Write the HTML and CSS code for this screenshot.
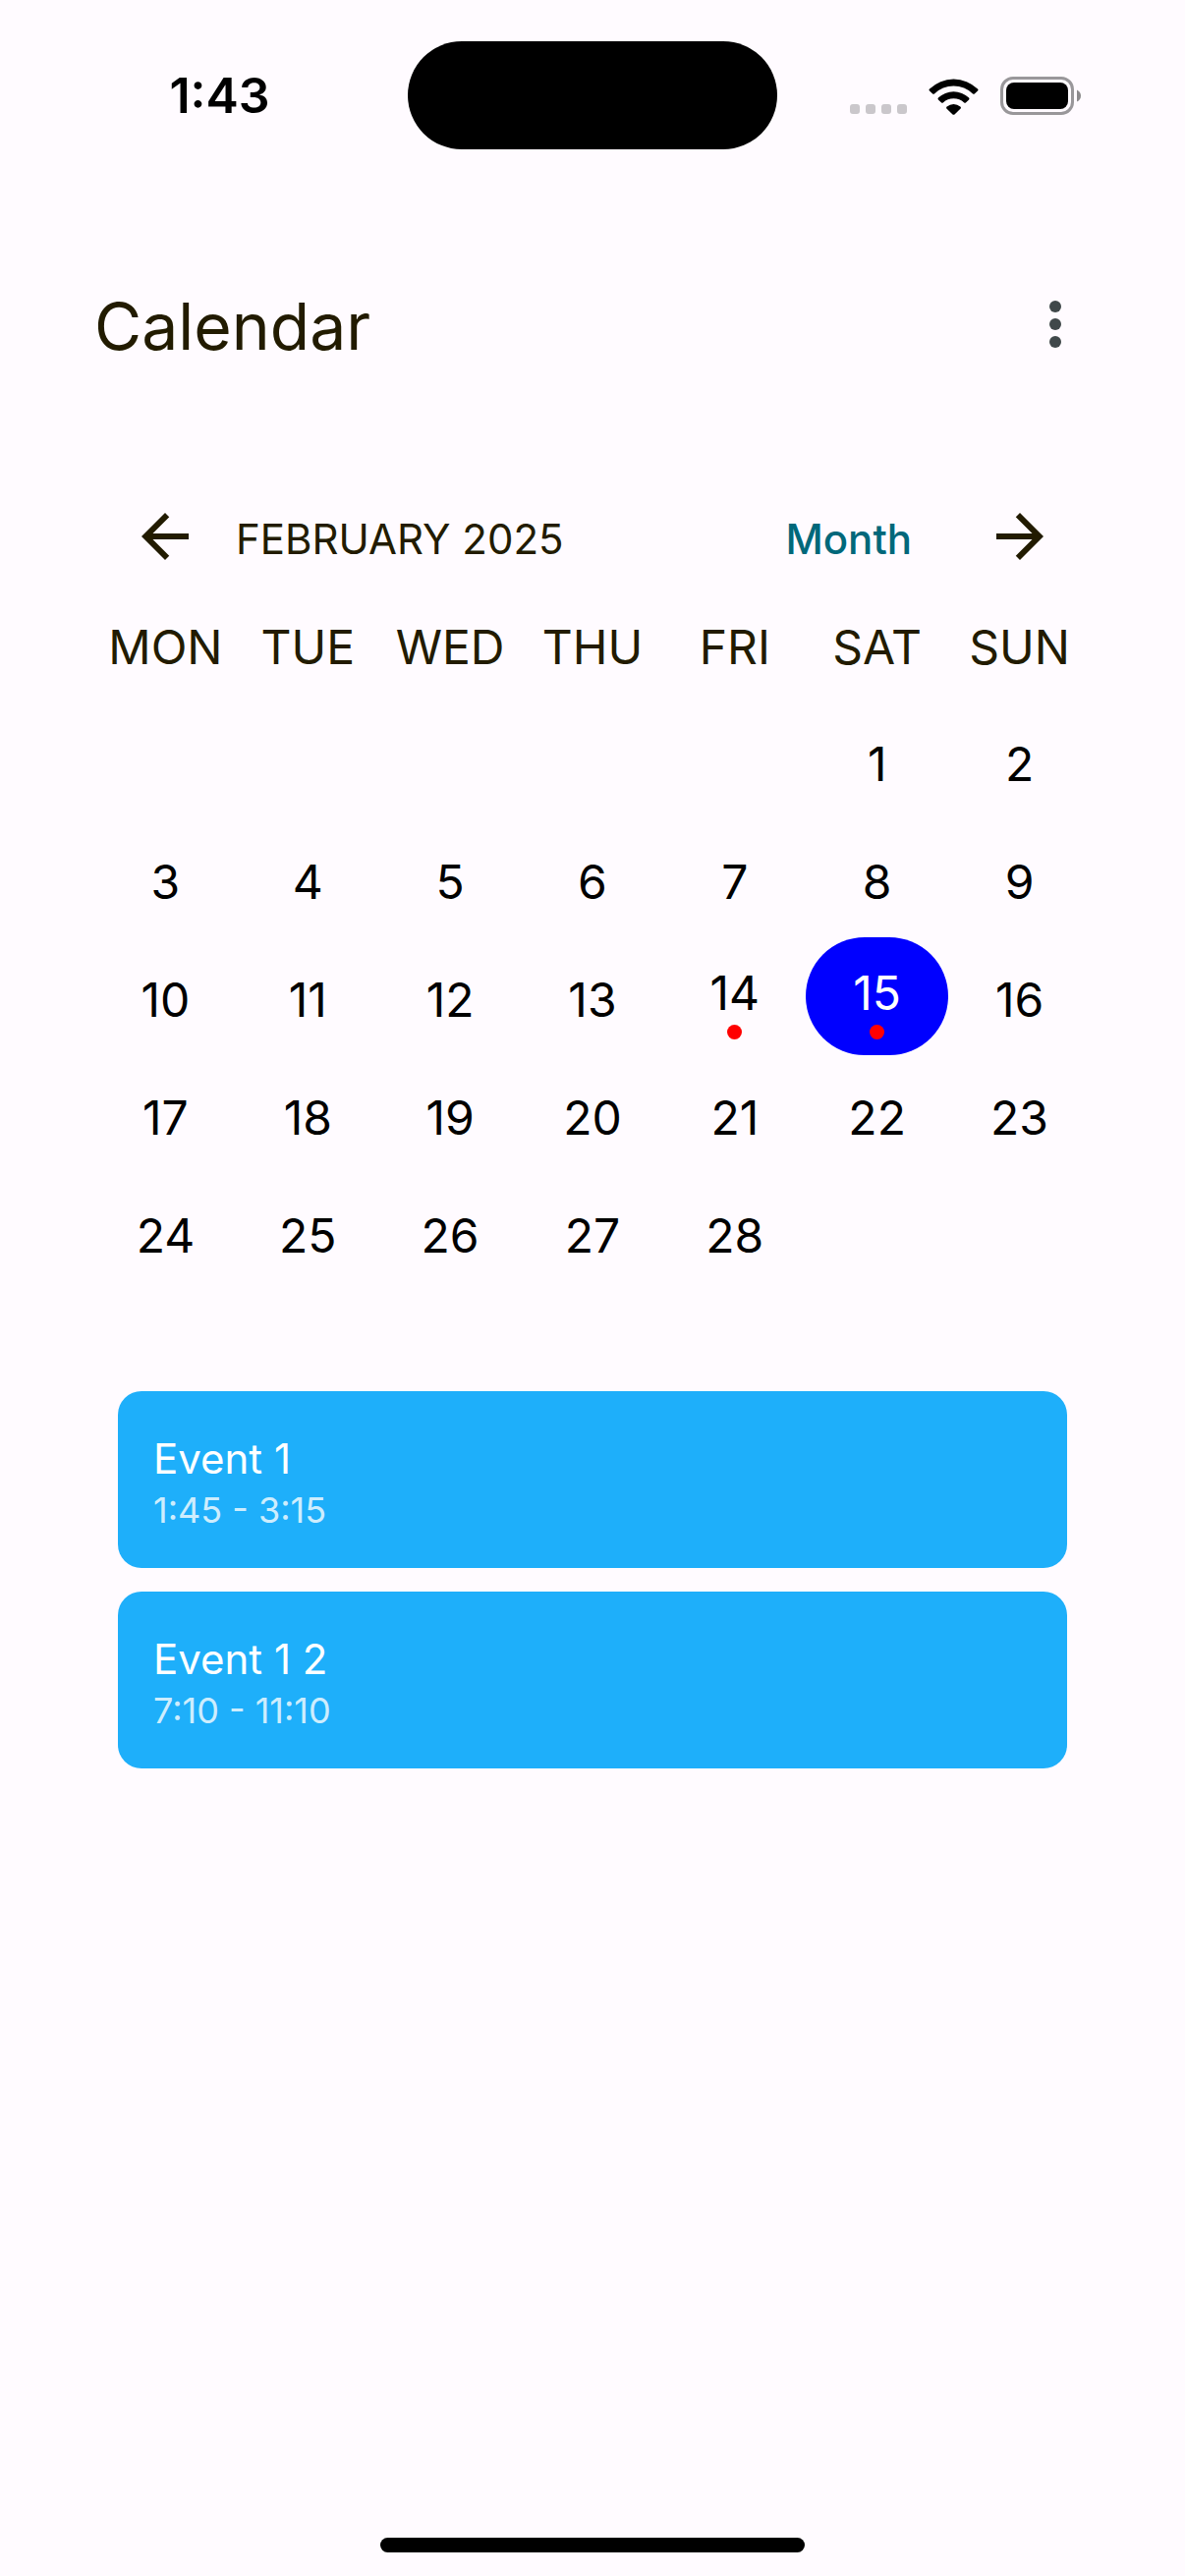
FILE: index.html
```html
<!DOCTYPE html>
<html lang="en">
<head>
<meta charset="utf-8">
<meta name="viewport" content="width=device-width, initial-scale=1">
<title>Calendar</title>
<link rel="stylesheet" href="styles.css">
</head>
<body>
<div class="screen">
  <div class="status-bar">
    <time class="clock">1:43</time>
    <div class="island"></div>
    <div class="status-icons">
      <svg class="signal" viewBox="0 0 58 10" aria-hidden="true">
        <rect width="10" height="10" rx="3"/><rect x="16" width="10" height="10" rx="3"/><rect x="32" width="10" height="10" rx="3"/><rect x="48" width="10" height="10" rx="3"/>
      </svg>
      <svg class="wifi" viewBox="0 0 51 38" aria-hidden="true">
        <path d="M1 11.6A35 35 0 0 1 50 11.6Q51 12.4 50 13.4L46.8 16.5Q46 17.2 45.1 16.4A28 28 0 0 0 5.9 16.4Q5 17.2 4.2 16.5L1 13.4Q0 12.4 1 11.6Z"/>
        <path d="M9.9 20.6A22.3 22.3 0 0 1 41.1 20.6Q42 21.5 41.1 22.4L37.9 25.5Q37.1 26.2 36.2 25.5A15.7 15.7 0 0 0 14.8 25.5Q13.9 26.2 13.1 25.5L9.9 22.4Q9 21.5 9.9 20.6Z"/>
        <path d="M18.7 29.5A10.5 10.5 0 0 1 32.3 29.5Q33.5 30.6 32.4 31.7L26.5 37.4Q25.5 38.2 24.5 37.4L18.6 31.7Q17.5 30.6 18.7 29.5Z"/>
      </svg>
      <svg class="battery" viewBox="0 0 82 39" aria-hidden="true">
        <rect class="battery-shell" x="1.5" y="1.5" width="72" height="36" rx="11.5"/>
        <rect x="6" y="6" width="63" height="27" rx="8"/>
        <path class="battery-tip" d="M78 13.5Q82 15.5 82 19.5Q82 23.5 78 25.5Z"/>
      </svg>
    </div>
  </div>

  <header class="app-bar">
    <h1 class="app-title">Calendar</h1>
    <button class="icon-button" type="button" aria-label="More options">
      <svg class="icon icon-more" viewBox="0 0 24 24"><circle cx="12" cy="6" r="2"/><circle cx="12" cy="12" r="2"/><circle cx="12" cy="18" r="2"/></svg>
    </button>
  </header>

  <main class="content">
    <div class="month-nav">
      <button class="icon-button" type="button" aria-label="Previous month">
        <svg class="icon" viewBox="0 0 24 24"><path d="M20 11H7.83l5.59-5.59L12 4l-8 8 8 8 1.41-1.41L7.83 13H20z"/></svg>
      </button>
      <h2 class="month-title">FEBRUARY 2025</h2>
      <button class="view-button" type="button">Month</button>
      <button class="icon-button" type="button" aria-label="Next month">
        <svg class="icon" viewBox="0 0 24 24"><path d="M12 4l-1.41 1.41L16.17 11H4v2h12.17l-5.58 5.59L12 20l8-8z"/></svg>
      </button>
    </div>

    <table class="month">
      <thead>
        <tr><th scope="col">MON</th><th scope="col">TUE</th><th scope="col">WED</th><th scope="col">THU</th><th scope="col">FRI</th><th scope="col">SAT</th><th scope="col">SUN</th></tr>
      </thead>
      <tbody>
        <tr>
          <td></td><td></td><td></td><td></td><td></td>
          <td><button class="day" type="button">1</button></td>
          <td><button class="day" type="button">2</button></td>
        </tr>
        <tr>
          <td><button class="day" type="button">3</button></td>
          <td><button class="day" type="button">4</button></td>
          <td><button class="day" type="button">5</button></td>
          <td><button class="day" type="button">6</button></td>
          <td><button class="day" type="button">7</button></td>
          <td><button class="day" type="button">8</button></td>
          <td><button class="day" type="button">9</button></td>
        </tr>
        <tr>
          <td><button class="day" type="button">10</button></td>
          <td><button class="day" type="button">11</button></td>
          <td><button class="day" type="button">12</button></td>
          <td><button class="day" type="button">13</button></td>
          <td><button class="day has-event" type="button">14<span class="dot"></span></button></td>
          <td><button class="day has-event selected" type="button" aria-pressed="true">15<span class="dot"></span></button></td>
          <td><button class="day" type="button">16</button></td>
        </tr>
        <tr>
          <td><button class="day" type="button">17</button></td>
          <td><button class="day" type="button">18</button></td>
          <td><button class="day" type="button">19</button></td>
          <td><button class="day" type="button">20</button></td>
          <td><button class="day" type="button">21</button></td>
          <td><button class="day" type="button">22</button></td>
          <td><button class="day" type="button">23</button></td>
        </tr>
        <tr>
          <td><button class="day" type="button">24</button></td>
          <td><button class="day" type="button">25</button></td>
          <td><button class="day" type="button">26</button></td>
          <td><button class="day" type="button">27</button></td>
          <td><button class="day" type="button">28</button></td>
          <td></td><td></td>
        </tr>
      </tbody>
    </table>

    <ul class="events">
      <li class="event">
        <h3 class="event-title">Event 1</h3>
        <p class="event-time">1:45 - 3:15</p>
      </li>
      <li class="event">
        <h3 class="event-title">Event 1 2</h3>
        <p class="event-time">7:10 - 11:10</p>
      </li>
    </ul>
  </main>

  <div class="home-indicator"></div>
</div>
</body>
</html>
```
FILE: styles.css
```css
:root {
  --surface: #fffbff;
  --ink: #221b00;
  --icon-muted: #40484a;
  --primary: #00687a;
  --event: #1eaffa;
}

* {
  box-sizing: border-box;
}

body {
  margin: 0;
  background: var(--surface);
  color: var(--ink);
  font-family: Inter, "Liberation Sans", sans-serif;
  font-optical-sizing: none;
}

h1, h2, h3, p, ul {
  margin: 0;
  padding: 0;
  font-weight: 400;
}

button {
  padding: 0;
  border: 0;
  background: none;
  color: inherit;
  font: inherit;
  font-optical-sizing: none;
  cursor: pointer;
}

.screen {
  display: flex;
  flex-direction: column;
  min-height: 100vh;
}

/* Status bar */
.status-bar {
  display: grid;
  grid-template-columns: 1fr 376px 1fr;
  align-items: center;
  padding-top: 42px;
}

.clock {
  padding-left: 32px;
  color: #000;
  font-size: 50px;
  font-weight: 600;
  line-height: 60px;
  text-align: center;
}

.island {
  height: 110px;
  border-radius: 60px;
  background: #000;
}

.status-icons {
  display: flex;
  align-items: flex-end;
  justify-content: flex-end;
  gap: 22px;
  padding-right: 106px;
}

.signal {
  width: 58px;
  height: 10px;
  margin-bottom: 1px;
  fill: #cac7cb;
}

.wifi {
  width: 51px;
  height: 38px;
}

.battery {
  width: 82px;
  height: 39px;
}

.battery-shell {
  fill: none;
  stroke: #99979a;
  stroke-width: 3;
}

.battery-tip {
  fill: #8c8a8c;
}

/* App bar */
.app-bar {
  display: flex;
  align-items: center;
  justify-content: space-between;
  padding: 130px 96px 120px;
}

.app-title {
  padding-top: 4px;
  font-size: 66px;
  line-height: 92px;
}

.icon-button {
  width: 72px;
  height: 72px;
}

.icon {
  display: block;
  width: 72px;
  height: 72px;
  fill: currentColor;
}

.icon-more {
  fill: var(--icon-muted);
}

/* Month */
.content {
  padding: 0 96px;
}

.month-nav {
  display: flex;
  align-items: center;
  height: 96px;
  padding: 0 36px;
}

.month-title {
  flex: 1;
  padding: 6px 0 0 36px;
  font-size: 42px;
  line-height: 48px;
}

.view-button {
  padding-top: 6px;
  margin-right: 74px;
  color: var(--primary);
  font-size: 42px;
  font-weight: 500;
  line-height: 48px;
}

.month {
  width: 100%;
  border-collapse: collapse;
  table-layout: fixed;
}

.month th,
.month td {
  height: 120px;
  padding: 0;
}

.month th {
  padding-top: 8px;
  font-size: 48px;
  font-weight: 400;
}

.day {
  display: flex;
  flex-direction: column;
  align-items: center;
  justify-content: flex-start;
  gap: 8px;
  width: 100%;
  height: 120px;
  padding-top: 40px;
  border-radius: 60px;
  color: #000;
  font-size: 48px;
  line-height: 48px;
}

.day.has-event {
  padding-top: 33px;
}

.day.selected {
  background: #00f;
  color: #fff;
}

.dot {
  width: 15px;
  height: 15px;
  border-radius: 50%;
  background: #f00;
}

/* Events */
.events {
  display: grid;
  gap: 24px;
  padding: 102px 24px 60px;
  list-style: none;
}

.event {
  padding: 40px 36px 36px;
  border-radius: 24px;
  background: var(--event);
  color: #fff;
}

.event-title {
  font-size: 42px;
  line-height: 58px;
}

.event-time {
  color: rgba(255, 255, 255, 0.8);
  font-size: 36px;
  line-height: 46px;
}

.home-indicator {
  width: 36%;
  max-width: 432px;
  height: 15px;
  margin: auto auto 24px;
  border-radius: 8px;
  background: #000;
}
```
